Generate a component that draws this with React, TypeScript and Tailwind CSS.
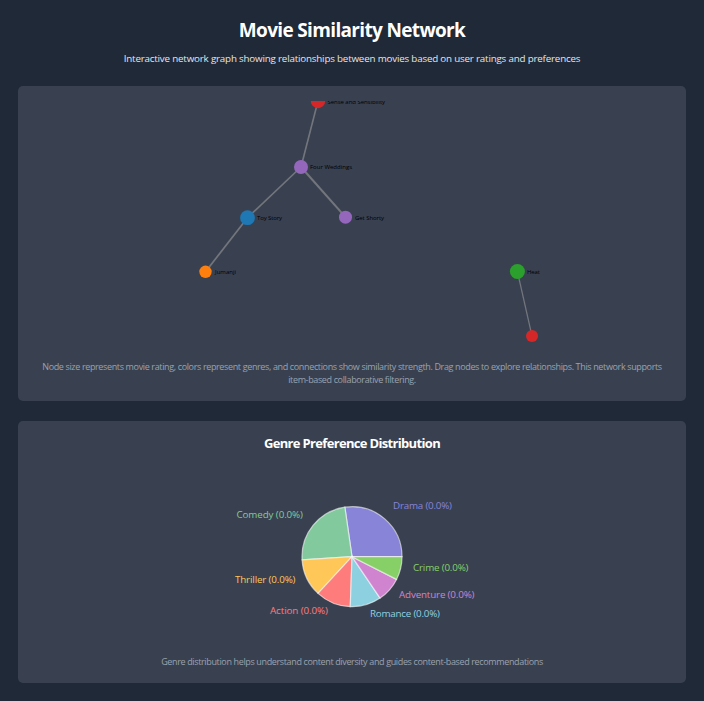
const links = [
  { x1: 318, y1: 101, x2: 301, y2: 167, w: 1.6 },
  { x1: 301, y1: 167, x2: 247.5, y2: 217.7, w: 1.6 },
  { x1: 301, y1: 167, x2: 345.5, y2: 217.2, w: 2 },
  { x1: 247.5, y1: 217.7, x2: 205.5, y2: 271.8, w: 1.7 },
  { x1: 517.4, y1: 271.5, x2: 532, y2: 336, w: 1.2 },
];

const nodes = [
  { x: 318, y: 101, r: 7.2, color: "#d62728", label: "Sense and Sensibility", tx: 327.5, ty: 104, width: 57.5 },
  { x: 301, y: 167, r: 7, color: "#9467bd", label: "Four Weddings", tx: 310, ty: 169, width: 42 },
  { x: 247.5, y: 217.7, r: 7.4, color: "#1f77b4", label: "Toy Story", tx: 257, ty: 220, width: 25 },
  { x: 345.5, y: 217.2, r: 6.5, color: "#9467bd", label: "Get Shorty", tx: 355, ty: 220, width: 29 },
  { x: 205.5, y: 271.8, r: 6.2, color: "#ff7f0e", label: "Jumanji", tx: 215, ty: 274, width: 21 },
  { x: 517.4, y: 271.5, r: 7.5, color: "#2ca02c", label: "Heat", tx: 527, ty: 274, width: 13 },
  { x: 532, y: 336, r: 6, color: "#d62728", label: "", tx: 0, ty: 0, width: 0 },
];

const genres = [
  { name: "Drama", from: 0, to: 98.2, color: "#8884d8", x: 393, y: 509, width: 59 },
  { name: "Comedy", from: 98.2, to: 183.6, color: "#82ca9d", x: 236.5, y: 518, width: 66.5 },
  { name: "Thriller", from: 183.6, to: 227.2, color: "#ffc658", x: 235, y: 583, width: 60.5 },
  { name: "Action", from: 227.2, to: 268, color: "#ff7c7c", x: 270, y: 614, width: 58 },
  { name: "Romance", from: 268, to: 304.2, color: "#8dd1e1", x: 370, y: 617, width: 70 },
  { name: "Adventure", from: 304.2, to: 333, color: "#d084d0", x: 399, y: 598, width: 75.5 },
  { name: "Crime", from: 333, to: 360, color: "#87d068", x: 413, y: 571, width: 55.5 },
];

function slicePath(from: number, to: number) {
  const cx = 352;
  const cy = 556.7;
  const r = 50;
  const point = (deg: number) => {
    const a = (deg * Math.PI) / 180;
    return `${cx + r * Math.cos(a)} ${cy - r * Math.sin(a)}`;
  };
  return `M${cx} ${cy}L${point(from)}A${r} ${r} 0 0 0 ${point(to)}Z`;
}

function NetworkGraph() {
  return (
    <svg className="block h-[250px] w-full" viewBox="33 101 638 250">
      {links.map((l, i) => (
        <line key={i} x1={l.x1} y1={l.y1} x2={l.x2} y2={l.y2} stroke="#999999" strokeOpacity={0.6} strokeWidth={l.w} />
      ))}
      {nodes.map((n, i) => (
        <g key={i}>
          <circle cx={n.x} cy={n.y} r={n.r} fill={n.color} />
          {n.label && (
            <text x={n.tx} y={n.ty} fontSize={6} fill="#000000" textLength={n.width}>
              {n.label}
            </text>
          )}
        </g>
      ))}
    </svg>
  );
}

function GenrePie() {
  return (
    <svg className="block h-[188px] w-full" viewBox="33 463 638 188">
      {genres.map((g) => (
        <path key={g.name} d={slicePath(g.from, g.to)} fill={g.color} stroke="#ffffff" strokeOpacity={0.6} strokeWidth={1.2} />
      ))}
      {genres.map((g) => (
        <text key={g.name} x={g.x} y={g.y} fontSize={9.8} fill={g.color} textLength={g.width}>
          {`${g.name} (0.0%)`}
        </text>
      ))}
    </svg>
  );
}

export default function App() {
  return (
    <main className="flex h-[701px] w-[704px] flex-col bg-[#1f2937] px-[18px] pt-[18px] text-center font-['Open_Sans','Noto_Sans',sans-serif]">
      <h1 className="text-[19px] leading-6 font-bold tracking-[-0.66px] text-white">Movie Similarity Network</h1>
      <p className="mt-[9px] text-[9.8px] leading-4 tracking-[-0.19px] text-gray-200">
        Interactive network graph showing relationships between movies based on user ratings and preferences
      </p>
      <section className="mt-[19px] h-[315px] rounded-[5px] bg-[#394151] px-[5px] pt-[15px]">
        <div className="px-[10px]">
          <NetworkGraph />
        </div>
        <p className="mt-[9px] text-[9px] leading-[13px] tracking-[-0.36px] text-gray-400">
          Node size represents movie rating, colors represent genres, and connections show similarity strength. Drag nodes to explore relationships. This network supports
          <br />
          item-based collaborative filtering.
        </p>
      </section>
      <section className="mt-5 h-[262px] rounded-[5px] bg-[#394151] px-[15px] pt-[13px]">
        <h2 className="text-[13px] leading-[18px] font-bold tracking-[-0.67px] text-white">Genre Preference Distribution</h2>
        <div className="mt-[11px]">
          <GenrePie />
        </div>
        <p className="mt-[4px] text-[9px] leading-[13px] tracking-[-0.36px] text-gray-400">
          Genre distribution helps understand content diversity and guides content-based recommendations
        </p>
      </section>
    </main>
  );
}
